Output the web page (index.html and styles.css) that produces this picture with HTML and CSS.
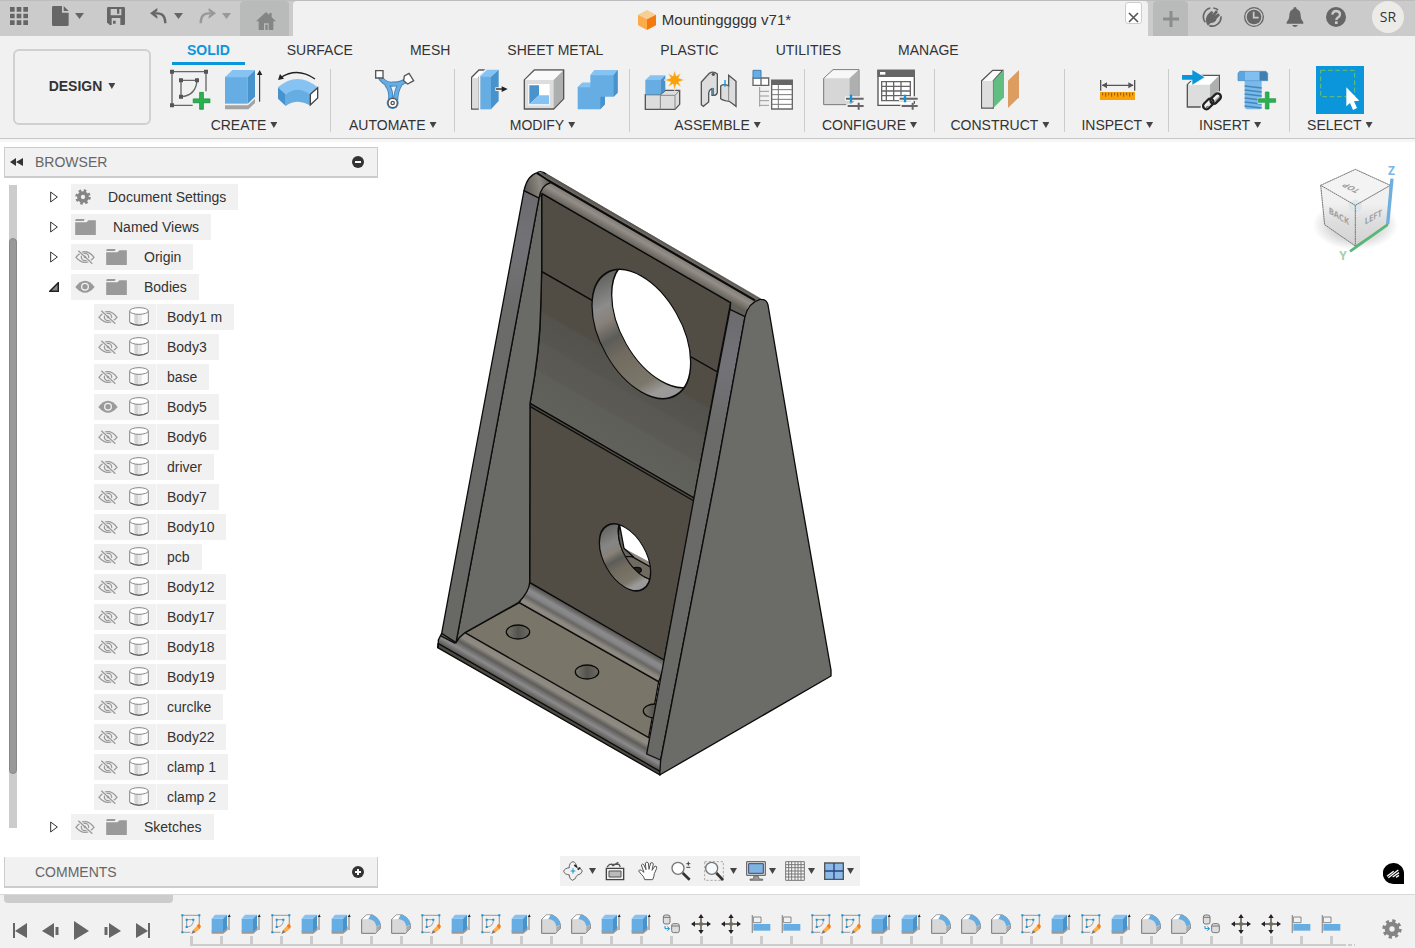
FILE: index.html
```html
<!DOCTYPE html>
<html lang="en">
<head>
<meta charset="utf-8">
<title>Mountinggggg v71*</title>
<link rel="stylesheet" href="styles.css">
</head>
<body>
<svg class="defs" aria-hidden="true">
  <defs>
    <symbol id="eye-off" viewBox="0 0 60 42"><g fill="none" stroke="#9a9a9a" stroke-width="4"><path d="M3 22Q30-12 57 22Q30 52 3 22Z"/><circle cx="30" cy="21" r="11"/><path d="M10 2L52 41" stroke="#f1f1f1" stroke-width="9"/><path d="M10 2L52 41"/></g><circle cx="30" cy="21" r="4" fill="#9a9a9a"/></symbol>
    <symbol id="eye-on" viewBox="0 0 60 42"><path d="M1 21Q30-16 59 21Q30 56 1 21Z" fill="#9a9a9a"/><circle cx="30" cy="20" r="10" fill="none" stroke="#f1f1f1" stroke-width="4"/></symbol>
    <symbol id="folder" viewBox="0 0 62 48"><path d="M0 10H34L40 4H62V48H0Z" fill="#9a9a9a"/><path d="M2 0H28L26 6H0Z" fill="#9a9a9a"/></symbol>
    <symbol id="body" viewBox="0 0 60 60"><path d="M2 13V46Q30 62 58 46V13Z" fill="#fbfbfb" stroke="#888" stroke-width="3"/><path d="M4 48Q30 62 56 48" fill="none" stroke="#555" stroke-width="3"/><rect x="16" y="20" width="12" height="31" fill="#d4d4d4"/><rect x="28" y="20" width="10" height="31" fill="#e6e6e6"/><ellipse cx="30" cy="12" rx="28" ry="10" fill="#fff" stroke="#888" stroke-width="3"/></symbol>
    <symbol id="closed" viewBox="0 0 24 36"><path d="M2 3V33L22 18Z" fill="#fff" stroke="#333" stroke-width="3"/></symbol>
    <symbol id="open" viewBox="0 0 27 27"><path d="M25 2V25H2Z" fill="#888" stroke="#222" stroke-width="4"/></symbol>
    <symbol id="gear" viewBox="0 0 60 60"><circle cx="30" cy="30" r="24" fill="none" stroke="#858585" stroke-width="10" stroke-dasharray="9.4 9.45"/><circle cx="30" cy="30" r="15" fill="none" stroke="#858585" stroke-width="14"/></symbol>

    <symbol id="t-sketch" viewBox="0 0 60 60"><path d="M4 4H55V36M4 4V55H28" fill="none" stroke="#aaa" stroke-width="4"/><path d="M17 17H37C37 30 32 38 17 39Z" fill="none" stroke="#999" stroke-width="3"/><g fill="#0b96dc"><path d="M1 1h6v6h-6zM52 1h6v6h-6zM1 52h6v6h-6zM14 14h6v6h-6zM34 14h6v6h-6zM14 36h6v6h-6z"/></g><path d="M36 48L48 36L57 44L44 55Z" fill="#ffad46"/><path d="M47 36L52 30Q60 31 59 39L56 45Z" fill="#f57c14"/><path d="M36 48L31 60L44 55Z" fill="#777"/></symbol>
    <symbol id="t-extrude" viewBox="0 0 60 60"><path d="M2 48H36L50 36V48L37 59H2Z" fill="#999"/><path d="M2 14H36V53H2Z" fill="#66ade3"/><path d="M2 14L12 2H48L36 14Z" fill="#86c3f3"/><path d="M36 14L48 2V42L36 53Z" fill="#4993cc"/><path d="M54 8V48" stroke="#777" stroke-width="3"/><path d="M50 9L55 1L59 9Z" fill="#222"/></symbol>
    <symbol id="t-fillet" viewBox="0 0 60 60"><path d="M2 16L16 3H34Q56 14 58 34V44L44 58H2Z" fill="#d8d8d8" stroke="#777" stroke-width="3"/><path d="M3 16L16 4H28L22 15Z" fill="#fff"/><path d="M46 38L58 34V44L46 57Z" fill="#aaa"/><path d="M22 15L30 2Q56 8 59 32L46 37Q44 18 22 15Z" fill="#66ade3"/></symbol>
    <symbol id="t-copy" viewBox="0 0 60 60"><g fill="#ddd" stroke="#777" stroke-width="3"><rect x="7" y="3" width="20" height="27" rx="6"/><rect x="32" y="29" width="23" height="27" rx="6"/><path d="M7 10H27M32 36H55"/></g><path d="M12 36V44H24M19 38L26 44L19 50" fill="none" stroke="#0b96dc" stroke-width="3"/></symbol>
    <symbol id="t-move" viewBox="0 0 60 60"><path d="M30 8V52M8 30H52" stroke="#4a4844" stroke-width="4"/><path d="M30 0L38 12H22ZM30 60L38 48H22ZM0 30L12 22V38ZM60 30L48 22V38Z" fill="#222"/><path d="M25 25h10v10h-10z" fill="#756e5c"/></symbol>
    <symbol id="t-align" viewBox="0 0 60 60"><path d="M4 3V57" stroke="#999" stroke-width="4"/><path d="M7 9H30V26H7Z" fill="#f1f1f1" stroke="#888" stroke-width="3"/><path d="M7 30H58V50H7Z" fill="#66ade3"/></symbol>

    <linearGradient id="rail" gradientUnits="userSpaceOnUse" x1="365" y1="100" x2="402" y2="36"><stop offset="0" stop-color="#625f59"/><stop offset=".35" stop-color="#938e87"/><stop offset=".6" stop-color="#7b766f"/><stop offset=".8" stop-color="#4d4a44"/><stop offset="1" stop-color="#87847e"/></linearGradient>
    <linearGradient id="cap" x1="0" y1="0.6" x2="1" y2="0.4"><stop offset="0" stop-color="#595751"/><stop offset=".6" stop-color="#8d8983"/><stop offset="1" stop-color="#5e5b55"/></linearGradient>
    <linearGradient id="bands" gradientUnits="userSpaceOnUse" x1="365" y1="335" x2="185" y2="647"><stop offset=".28" stop-color="#514d45"/><stop offset=".3" stop-color="#54524c"/><stop offset=".5" stop-color="#565550"/><stop offset=".52" stop-color="#595853"/><stop offset=".72" stop-color="#5b5a55"/><stop offset=".74" stop-color="#5f5f5a"/><stop offset="1" stop-color="#61615c"/></linearGradient>
    <linearGradient id="bore" gradientUnits="userSpaceOnUse" x1="540" y1="350" x2="746" y2="715"><stop offset="0" stop-color="#62625f"/><stop offset=".2" stop-color="#8c8c8c"/><stop offset=".3" stop-color="#888178"/><stop offset=".43" stop-color="#5c5c58"/><stop offset=".55" stop-color="#706a5f"/><stop offset=".82" stop-color="#7c776b"/><stop offset=".92" stop-color="#9c9b9a"/><stop offset="1" stop-color="#999"/></linearGradient>
    <linearGradient id="bore2" gradientUnits="userSpaceOnUse" x1="545" y1="1105" x2="648" y2="1288"><stop offset="0" stop-color="#62625f"/><stop offset=".25" stop-color="#868686"/><stop offset=".38" stop-color="#888178"/><stop offset=".5" stop-color="#5c5c58"/><stop offset=".62" stop-color="#706a5f"/><stop offset=".85" stop-color="#7c776b"/><stop offset=".95" stop-color="#9c9b9a"/><stop offset="1" stop-color="#999"/></linearGradient>
    <linearGradient id="fillet" gradientUnits="userSpaceOnUse" x1="330" y1="1267" x2="295" y2="1328"><stop offset="0" stop-color="#4c4a45"/><stop offset=".3" stop-color="#8b8b8d"/><stop offset=".45" stop-color="#858588"/><stop offset=".6" stop-color="#686763"/><stop offset=".8" stop-color="#8f8a82"/><stop offset="1" stop-color="#8a857b"/></linearGradient>
    <linearGradient id="lip" gradientUnits="userSpaceOnUse" x1="135" y1="1418" x2="101" y2="1477"><stop offset="0" stop-color="#8d887f"/><stop offset=".25" stop-color="#8f8a82"/><stop offset=".45" stop-color="#5e5d59"/><stop offset=".72" stop-color="#8b8b8d"/><stop offset="1" stop-color="#55534e"/></linearGradient>
    <linearGradient id="strip" x1="0" y1="0" x2="0" y2="1"><stop offset="0" stop-color="#6b6b6e"/><stop offset=".12" stop-color="#737278"/><stop offset=".26" stop-color="#6b6b6a"/><stop offset="1" stop-color="#686965"/></linearGradient>
    <linearGradient id="screw"><stop offset="0" stop-color="#7a776e"/><stop offset=".5" stop-color="#55534d"/><stop offset="1" stop-color="#6d6b65"/></linearGradient>
    <clipPath id="bigHole"><ellipse rx="148" ry="174" transform="translate(664 522) skewY(29.9)"/></clipPath>
    <clipPath id="smallHole"><ellipse rx="77" ry="90" transform="translate(615 1192) skewY(29.9)"/></clipPath>
    <clipPath id="smallThrough"><ellipse rx="77" ry="90" transform="translate(672 1160) skewY(29.9)"/></clipPath>
    <radialGradient id="shade"><stop offset=".5" stop-color="#bbb"/><stop offset="1" stop-color="#fff"/></radialGradient>
    <linearGradient id="cubeSide" x1="0" y1="0" x2="0" y2="1"><stop offset=".3" stop-color="#f0f0f0"/><stop offset=".6" stop-color="#dedede"/><stop offset="1" stop-color="#d2d2d2"/></linearGradient>
  </defs>
</svg>

<header class="topbar">
  <div class="quick">
    <button class="tool" aria-label="Data panel"><svg width="18" height="18" viewBox="0 0 54 54"><path d="M0 0h14v14H0zM20 0h14v14H20zM40 0h14v14H40zM0 20h14v14H0zM20 20h14v14H20zM40 20h14v14H40zM0 40h14v14H0zM20 40h14v14H20zM40 40h14v14H40z" fill="#666"/></svg></button>
    <button class="tool tool--file" aria-label="File"><svg width="17" height="20" viewBox="0 0 51 60"><path d="M4 0H30V20H50V56Q50 60 46 60H4Q0 60 0 56V4Q0 0 4 0Z" fill="#666"/><path d="M35 0L50 15H35Z" fill="#666"/></svg><i class="caret caret--big"></i></button>
    <button class="tool tool--save" aria-label="Save"><svg width="18" height="18" viewBox="0 0 54 54"><path d="M4 0H50Q54 0 54 4V50Q54 54 50 54H8L0 46V4Q0 0 4 0Z" fill="#666"/><path d="M11 6H43V25H11ZM14 33H40V54H14Z" fill="#ccc"/><path d="M30 4H37V20H30ZM18 41H26V50H18Z" fill="#666"/></svg></button>
    <button class="tool tool--undo" aria-label="Undo"><svg width="18" height="16" viewBox="0 0 54 48"><path d="M22 0V9L12 16L22 24V32L0 16Z" fill="#666"/><path d="M10 16H22Q46 16 46 46" fill="none" stroke="#666" stroke-width="7"/></svg><i class="caret caret--big"></i></button>
    <button class="tool tool--redo" aria-label="Redo" disabled><svg width="18" height="16" viewBox="0 0 54 48"><path d="M32 0V9L42 16L32 24V32L54 16Z" fill="#999"/><path d="M44 16H32Q8 16 8 46" fill="none" stroke="#999" stroke-width="7"/></svg><i class="caret caret--big"></i></button>
  </div>
  <button class="home" aria-label="Home"><svg width="20" height="18" viewBox="0 0 60 54"><path d="M30 0L40 9V3H47V16L60 28H52V54H38V34H24V54H8V28H0Z" fill="#858585"/><path d="M28 38H35V54H28Z" fill="#858585"/></svg></button>
  <div class="doc">
    <svg width="18" height="20" viewBox="0 0 54 60"><path d="M27 0L54 14L27 28L0 14Z" fill="#f5cf96"/><path d="M0 14L27 28V60L0 46Z" fill="#fcab4a"/><path d="M54 14L27 28V60L54 46Z" fill="#f5780f"/></svg>
    <span>Mountinggggg v71*</span>
    <button class="doc__close" aria-label="Close"><svg width="11" height="11" viewBox="0 0 11 11"><path d="M1 1L10 10M10 1L1 10" stroke="#555" stroke-width="1.6"/></svg></button>
  </div>
  <button class="newtab" aria-label="New tab"><svg width="16" height="16" viewBox="0 0 16 16"><path d="M8 0V16M0 8H16" stroke="#8c8c8c" stroke-width="3"/></svg></button>
  <div class="status">
    <button class="tool" aria-label="Extensions"><svg width="20" height="20" viewBox="0 0 60 60"><path d="M25 3A27 27 0 0 0 10 46M22 56A27 27 0 0 0 57 28M34 3Q42 4 48 9" fill="none" stroke="#666" stroke-width="5"/><path d="M14 50Q8 34 18 22L28 12L34 16L30 23L42 10L48 15L38 27L49 19L54 25L44 35Q40 48 26 48L18 56Z" fill="#666"/></svg></button>
    <button class="tool" aria-label="Job status"><svg width="20" height="20" viewBox="0 0 60 60"><circle cx="30" cy="30" r="28" fill="none" stroke="#666" stroke-width="4"/><circle cx="30" cy="30" r="22" fill="#666"/><path d="M29 14V32H44" fill="none" stroke="#ccc" stroke-width="5"/></svg></button>
    <button class="tool" aria-label="Notifications"><svg width="18" height="20" viewBox="0 0 54 60"><path d="M27 0Q32 0 32 6Q44 10 44 26Q44 38 52 46V50H2V46Q10 38 10 26Q10 10 22 6Q22 0 27 0ZM18 54H36Q32 60 27 60Q22 60 18 54Z" fill="#666"/></svg></button>
    <button class="tool" aria-label="Help"><svg width="20" height="20" viewBox="0 0 60 60"><circle cx="30" cy="30" r="30" fill="#666"/><path d="M19 23Q20 12 31 12Q42 13 42 22Q42 28 35 32Q31 35 31 39" fill="none" stroke="#ccc" stroke-width="7"/><path d="M27 43h8v8h-8z" fill="#ccc"/></svg></button>
    <button class="avatar">SR</button>
  </div>
</header>

<section class="ribbon">
  <button class="workspace-switch">DESIGN <i class="caret"></i></button>
  <div class="ribbon__main">
    <nav class="tabs">
      <button class="tab tab--active">SOLID</button>
      <button class="tab">SURFACE</button>
      <button class="tab">MESH</button>
      <button class="tab">SHEET METAL</button>
      <button class="tab">PLASTIC</button>
      <button class="tab">UTILITIES</button>
      <button class="tab">MANAGE</button>
    </nav>
    <div class="groups">
      <div class="group group--first">
        <div class="group__icons">
          <button class="cmd" aria-label="Create Sketch"><svg viewBox="0 0 144 144"><path d="M18 17H120V76M18 17V118H80" fill="none" stroke="#666" stroke-width="4"/><path d="M45 92V43H93Q90 88 45 92" fill="none" stroke="#666" stroke-width="4"/><path d="M12 11h12v12H12zM114 11h12v12h-12zM12 112h12v12H12zM39 37h12v12H39zM87 37h12v12H87zM39 86h12v12H39z" fill="#555"/><path d="M99 77H114V97H134V112H114V132H99V112H80V97H99Z" fill="#2bb24f" stroke="#f1f1f1" stroke-width="2"/><path d="M101 80H112V99H131V110H112V129H101V110H82V99H101Z" fill="none" stroke="#1d9440" stroke-width="2"/></svg></button>
          <button class="cmd" aria-label="Extrude"><svg viewBox="0 0 144 144"><path d="M15 118H84L105 98V111L85 130H15Z" fill="#a3a3a3"/><path d="M15 32H83V113H15Z" fill="#66ade3"/><path d="M15 34L37 12H105L83 34Z" fill="#86c3f3"/><path d="M83 34L105 12V92L83 113Z" fill="#4993cc"/><path d="M119 107V20" stroke="#222" stroke-width="3"/><path d="M119 12L127 27H111Z" fill="#222"/></svg></button>
          <button class="cmd" aria-label="Revolve"><svg viewBox="0 0 144 144"><path d="M12 64Q70 14 131 64L108 85Q70 62 35 85Z" fill="#86c3f3"/><path d="M35 85Q70 58 108 85V118Q70 96 35 120Z" fill="#66ade3"/><path d="M12 64L35 85V120L12 98Z" fill="#4993cc"/><path d="M109 85L131 65V96L109 117Z" fill="#fff" stroke="#444" stroke-width="4"/><path d="M123 39Q70 2 20 35" fill="none" stroke="#222" stroke-width="4"/><path d="M12 42L18 24L30 38Z" fill="#222"/></svg></button>
        </div>
        <button class="group__label">CREATE <i class="caret"></i></button>
      </div>
      <div class="group group--wide">
        <div class="group__icons">
          <button class="cmd" aria-label="Automated Modeling"><svg viewBox="0 0 144 144"><path d="M30 28Q46 58 72 54Q98 56 118 38M52 54Q70 76 64 104M94 54Q80 76 80 104" fill="none" stroke="#3f7fb2" stroke-width="15"/><path d="M30 28Q46 58 72 54Q98 56 118 38M52 54Q70 76 64 104M94 54Q80 76 80 104" fill="none" stroke="#66ade3" stroke-width="10"/><path d="M20 14H42V36H20Z" fill="#fff" stroke="#555" stroke-width="4"/><path d="M120 22L134 44L116 54L104 44L106 30Z" fill="#fff" stroke="#555" stroke-width="4"/><circle cx="71" cy="111" r="18" fill="#3f94d6"/><circle cx="71" cy="111" r="14" fill="#fff" stroke="#555" stroke-width="4"/><circle cx="71" cy="111" r="5" fill="none" stroke="#555" stroke-width="4"/></svg></button>
        </div>
        <button class="group__label">AUTOMATE <i class="caret"></i></button>
      </div>
      <div class="group">
        <div class="group__icons">
          <button class="cmd" aria-label="Press Pull"><svg viewBox="0 0 144 144"><path d="M20 34L42 12H64L42 34V129H20Z" fill="#fff" stroke="#555" stroke-width="4"/><path d="M22 36H40V127H22Z" fill="#ddd"/><path d="M62 8H72L47 32V134H41V30Z" fill="#f1f1f1"/><path d="M46 30H78V130H46Z" fill="#66ade3"/><path d="M46 30L66 11H101L78 32H46Z" fill="#86c3f3"/><path d="M78 32L101 11V105L78 130Z" fill="#4993cc"/><path d="M91 64H108V60L130 69L108 79V75H91Z" fill="#f1f1f1"/><path d="M93 69H112" stroke="#222" stroke-width="4"/><path d="M110 61L128 69L110 78Z" fill="#222"/></svg></button>
          <button class="cmd" aria-label="Shell"><svg viewBox="0 0 144 144"><path d="M16 42L46 12H134V98L104 129H16Z" fill="#ddd" stroke="#555" stroke-width="4"/><path d="M18 42L47 14H132L104 42Z" fill="#fafafa"/><path d="M104 42L132 14V97L104 127Z" fill="#aeb0b0"/><path d="M28 54H92V118H28Z" fill="#fff"/><path d="M31 58H60V88L31 115Z" fill="#4993cc"/><path d="M31 115L60 88H90V115Z" fill="#86c3f3"/></svg></button>
          <button class="cmd" aria-label="Combine"><svg viewBox="0 0 144 144"><path d="M14 64L28 50H52V28L65 12H134V80L122 92H96V115L82 130H14Z" fill="#66ade3"/><path d="M52 28L65 12H134L122 28ZM14 64L28 50H52V64Z" fill="#86c3f3"/><path d="M122 28L134 12V80L122 92ZM82 92H96V115L82 130Z" fill="#4993cc"/></svg></button>
        </div>
        <button class="group__label">MODIFY <i class="caret"></i></button>
      </div>
      <div class="group">
        <div class="group__icons">
          <button class="cmd" aria-label="New Component"><svg viewBox="0 0 144 144"><path d="M16 86H61L76 73H119V115L105 130H16Z" fill="#ddd" stroke="#555" stroke-width="4"/><path d="M61 86V130M105 88V128M61 88H105L118 74" fill="none" stroke="#888" stroke-width="3"/><path d="M16 42H61V86H16Z" fill="#66ade3"/><path d="M16 42L31 28H76L61 42Z" fill="#86c3f3"/><path d="M61 42L76 28V72L61 86Z" fill="#4993cc"/><path d="M104 12L109 30L123 21L116 36L134 42L116 48L124 63L109 54L104 74L99 54L84 63L92 48L72 42L92 36L84 21L99 30Z" fill="#f9a20c" stroke="#f1f1f1" stroke-width="2"/></svg></button>
          <button class="cmd" aria-label="Joint"><svg viewBox="0 0 144 144"><path d="M22 48L46 22Q58 14 70 24V80Q66 90 54 88V68Q44 72 44 84V108L28 121L22 116Z" fill="#ddd" stroke="#555" stroke-width="4"/><circle cx="58" cy="25" r="5" fill="#555"/><path d="M104 28L126 46V121L106 106Q88 104 80 98V60Q90 52 104 60Z" fill="#ddd" stroke="#555" stroke-width="4"/><path d="M104 60V104" stroke="#888" stroke-width="3"/><path d="M58 66V88M93 42V62" stroke="#0b96dc" stroke-width="4"/></svg></button>
          <button class="cmd" aria-label="Bill of Materials"><svg viewBox="0 0 144 144"><path d="M15 36H62V58H15ZM39 36V58" fill="#fff" stroke="#666" stroke-width="4"/><path d="M15 13H39V36H15Z" fill="#66ade3" stroke="#3f7fb2" stroke-width="3"/><path d="M35 63V122M35 76H63M35 90H63M35 104H63M35 118H63" stroke="#999" stroke-width="3"/><path d="M71 43H133V129H71Z" fill="#fff" stroke="#666" stroke-width="4"/><path d="M69 41H135V57H69Z" fill="#666"/><path d="M71 71H133M71 86H133M71 100H133M71 115H133M91 57V129" stroke="#777" stroke-width="3"/></svg></button>
        </div>
        <button class="group__label">ASSEMBLE <i class="caret"></i></button>
      </div>
      <div class="group group--mid">
        <div class="group__icons">
          <button class="cmd" aria-label="Configure Model"><svg viewBox="0 0 144 144"><path d="M14 37L42 11H120V90L92 116H14Z" fill="#d6d6d6" stroke="#777" stroke-width="3"/><path d="M16 37L43 13H118L92 37Z" fill="#f7f7f7"/><path d="M92 37L118 13V89L92 114Z" fill="#aeb0b0"/><path d="M78 98H136M82 120H136" stroke="#f1f1f1" stroke-width="14"/><path d="M81 98H134M86 120H134M119 110V131" stroke="#666" stroke-width="6"/><path d="M96 86V109" stroke="#0b96dc" stroke-width="7"/></svg></button>
          <button class="cmd" aria-label="Configuration Table"><svg viewBox="0 0 144 144"><path d="M15 13H124V118H15Z" fill="#fff" stroke="#555" stroke-width="4"/><path d="M13 11H126V33H13Z" fill="#666"/><path d="M21 18h16v8H21z" fill="#fff"/><path d="M26 47H112V104H26ZM26 61H112M26 75H112M26 89H112M40 47V104M62 47V104M84 47V104" fill="none" stroke="#666" stroke-width="4"/><path d="M78 98H136M82 120H136" stroke="#f1f1f1" stroke-width="14"/><path d="M80 98H134M86 120H134M119 110V131" stroke="#666" stroke-width="6"/><path d="M96 86V109" stroke="#0b96dc" stroke-width="7"/></svg></button>
        </div>
        <button class="group__label">CONFIGURE <i class="caret"></i></button>
      </div>
      <div class="group group--snug">
        <div class="group__icons">
          <button class="cmd" aria-label="Offset Plane"><svg viewBox="0 0 144 144"><path d="M17 44L50 13H80L52 44V126H17Z" fill="#fafafa" stroke="#555" stroke-width="4"/><path d="M19 45H50V124H19Z" fill="#ddd"/><path d="M52 44L84 12V94L52 126Z" fill="#62bd82"/><path d="M96 44L129 12V94L96 126Z" fill="#dd9c60"/></svg></button>
        </div>
        <button class="group__label">CONSTRUCT <i class="caret"></i></button>
      </div>
      <div class="group group--snug">
        <div class="group__icons">
          <button class="cmd" aria-label="Measure"><svg viewBox="0 0 144 144"><path d="M23 42V74M125 42V74M28 58H120" stroke="#555" stroke-width="4"/><path d="M26 58L42 49V67ZM122 58L106 49V67Z" fill="#555"/><path d="M21 78H126V102H21Z" fill="#f9a20c"/><path d="M29 80V88M38 80V92M47 80V88M56 80V92M65 80V88M74 80V92M83 80V88M92 80V92M101 80V88M110 80V92M119 80V88" stroke="#8a5a05" stroke-width="3"/></svg></button>
        </div>
        <button class="group__label">INSPECT <i class="caret"></i></button>
      </div>
      <div class="group">
        <div class="group__icons">
          <button class="cmd" aria-label="Insert Derive"><svg viewBox="0 0 144 144"><path d="M25 56L54 28H121V95L93 123H25Z" fill="#ddd" stroke="#555" stroke-width="4"/><path d="M27 56L55 30H119L93 56Z" fill="#fff"/><path d="M93 56L119 30V94L93 121Z" fill="#aeb0b0"/><path d="M7 24H38V8L80 34L38 60V44H7Z" fill="#f1f1f1"/><path d="M9 27H40V12L76 34L40 56V41H9Z" fill="#0b96dc"/><g fill="none" stroke="#f1f1f1" stroke-width="15"><rect x="94" y="90" width="36" height="20" rx="10" transform="rotate(-45 112 97)"/><rect x="68" y="108" width="36" height="20" rx="10" transform="rotate(-45 88 116)"/></g><g fill="none" stroke="#222" stroke-width="7"><rect x="92" y="88" width="36" height="20" rx="10" transform="rotate(-45 110 98)"/><rect x="70" y="104" width="36" height="20" rx="10" transform="rotate(-45 88 114)"/></g></svg></button>
          <button class="cmd" aria-label="Insert Fastener"><svg viewBox="0 0 144 144"><path d="M35 44H86V126L80 130H41L35 126Z" fill="#7ab9ea"/><path d="M35 60L86 66M35 72L86 78M35 84L86 90M35 96L86 102M35 108L86 114M35 120L86 126" stroke="#4388bd" stroke-width="4"/><path d="M20 16H99L104 22V44H15V22Z" fill="#5ca6df" stroke="#4388bd" stroke-width="2"/><path d="M36 17H80V43H36Z" fill="#80bff0"/><path d="M80 17H98L103 22V43H80Z" fill="#3f7fb2"/><path d="M93 76H111V95H130V113H111V132H93V113H74V95H93Z" fill="#f1f1f1"/><path d="M97 78H108V98H128V109H108V129H97V109H76V98H97Z" fill="#2bb24f" stroke="#1d9440" stroke-width="2"/></svg></button>
        </div>
        <button class="group__label">INSERT <i class="caret"></i></button>
      </div>
      <div class="group group--last">
        <div class="group__icons">
          <button class="cmd cmd--on" aria-label="Select"><svg viewBox="0 0 144 144"><path d="M14 13H116V92H14Z" fill="none" stroke="#6cc06c" stroke-width="3" stroke-dasharray="14 8"/><path d="M91 64L130 104L114 106L123 126L111 132L102 111L91 121Z" fill="#fff"/></svg></button>
        </div>
        <button class="group__label">SELECT <i class="caret"></i></button>
      </div>
    </div>
  </div>
</section>

<main class="workspace">
  <svg class="model" viewBox="0 0 1290 1890" role="img" aria-label="Mounting bracket model">
    <g stroke="#0c0c0c" stroke-width="4" stroke-linejoin="round">
      <path d="M55 1440L65 1420L108 1440L135 1418L686 1733L730 1790L719 1845L53 1463Z" fill="url(#lip)" stroke="none"/>
      <path d="M54 1450L720 1834V1845L53 1463Z" fill="#4d4a44"/>
      <path d="M298 1328L716 1565L686 1733L135 1418Z" fill="#7a7569"/>
      <path d="M329 1267L740 1502L716 1565L298 1328Z" fill="url(#fillet)"/>
      <ellipse cx="294" cy="1416" rx="35" ry="21" fill="url(#screw)"/>
      <ellipse cx="501" cy="1536" rx="35" ry="21" fill="url(#screw)"/>
      <ellipse cx="705" cy="1653" rx="35" ry="21" fill="url(#screw)"/>
      <path d="M365 100L932 428L892 636L365 335Z" fill="#514d45"/>
      <path d="M365 335L892 636L822 1014L330 730Q362 560 362 440Z" fill="url(#bands)"/>
      <path d="M330 730L822 1014L822 1024L732 1500L329 1267Z" fill="#514d45"/>
      <path d="M330 739L822 1023" fill="none"/>
      <g clip-path="url(#bigHole)">
        <path d="M500 310H830V730H500Z" fill="url(#bore)" stroke="none"/>
        <ellipse rx="148" ry="174" transform="translate(723 489) skewY(29.9)" fill="#fff"/>
      </g>
      <ellipse rx="148" ry="174" transform="translate(664 522) skewY(29.9)" fill="none"/>
      <g clip-path="url(#smallHole)">
        <path d="M530 1080H700V1300H530Z" fill="url(#bore2)" stroke="none"/>
        <ellipse rx="77" ry="90" transform="translate(672 1160) skewY(29.9)" fill="#fff"/>
        <g clip-path="url(#smallThrough)">
          <path d="M604 1160L700 1212V1300H604Z" fill="#8d8880" stroke="none"/>
          <path d="M604 1172L700 1226V1300H604Z" fill="#6f6b61"/>
          <path d="M598 1090L612 1165L640 1190H590Z" fill="#65655f"/>
          <ellipse cx="650" cy="1230" rx="14" ry="8" fill="#222"/>
        </g>
        <ellipse rx="77" ry="90" transform="translate(672 1160) skewY(29.9)" fill="none"/>
      </g>
      <ellipse rx="77" ry="90" transform="translate(615 1192) skewY(29.9)" fill="none"/>
      <path d="M357 114L365 100V335L362 440Q360 570 330 730L329 1267Q328 1295 295 1328L135 1418Q118 1430 108 1448L200 960Z" fill="#6a6b66"/>
      <path d="M312 92L357 114L200 960L108 1448L65 1420L150 960Z" fill="url(#strip)"/>
      <path d="M65 1420L55 1440V1463M60 1426L106 1450" fill="none"/>
      <path d="M357 114L362 60L350 40L372 36L1022 416L985 440L975 470L930 448L932 428L365 100Z" fill="url(#rail)" stroke="none"/>
      <path d="M312 92Q322 46 352 38L393 68Q364 74 357 114Z" fill="url(#cap)"/>
      <path d="M352 38Q364 30 378 42M350 40L1006 420M393 68L1004 422M365 100L932 428L930 448" fill="none"/>
      <path d="M378 42L1022 416" fill="none" stroke="#555" stroke-width="2"/>
      <path d="M930 448L975 470L885 960L722 1800L680 1782L832 960Z" fill="url(#strip)"/>
      <path d="M975 470Q985 428 1020 418Q1040 417 1044 435L1133 960L1233 1530V1548L719 1845L722 1800L885 960Z" fill="#6b6c67"/>
    </g>
  </svg>

  <svg class="viewcube" viewBox="0 0 300 330" role="img" aria-label="View cube">
    <ellipse cx="130" cy="195" rx="128" ry="75" fill="url(#shade)" opacity=".7"/>
    <path d="M26 76L130 28L235 76L228 194L130 258L38 194Z" fill="#e6e6e6"/>
    <path d="M26 76L130 136V258L38 194Z" fill="url(#cubeSide)"/>
    <path d="M235 76L130 136V258L228 194Z" fill="url(#cubeSide)"/>
    <path d="M26 76L130 28L235 76L130 136Z" fill="#f3f3f3"/>
    <path d="M130 118L150 128L148 150L130 158L112 150L110 128Z" fill="#d3e4ea" opacity=".7"/>
    <path d="M26 76L130 28L235 76L130 136ZM26 76L38 194L130 258L228 194L235 76M130 136V258" fill="none" stroke="#777" stroke-width="3" stroke-dasharray="6 1"/>
    <path d="M227 192L240 56" stroke="#6fafe0" stroke-width="10"/>
    <path d="M227 194L114 274" stroke="#58b777" stroke-width="8"/>
    <text transform="matrix(.85 .5 0 1 50 160)" class="cube-text">BACK</text>
    <text transform="matrix(.85 -.45 0 1 158 194)" class="cube-text">LEFT</text>
    <text transform="matrix(-.8 -.4 .8 -.5 146 90)" class="cube-text">TOP</text>
    <text x="228" y="46" class="axis axis--z">Z</text>
    <text x="82" y="300" class="axis axis--y">Y</text>
  </svg>

  <aside class="side">
    <div class="panel-head">
      <svg width="13" height="8" viewBox="0 0 13 8"><path d="M6 0V8L0 4ZM13 0V8L6 4Z" fill="#333"/></svg>
      <h2>BROWSER</h2>
      <button aria-label="Collapse"><svg width="12" height="12" viewBox="0 0 12 12"><circle cx="6" cy="6" r="6" fill="#333"/><path d="M3 6H9" stroke="#fff" stroke-width="2"/></svg></button>
    </div>
    <div class="tree-wrap">
      <div class="scroll"><span></span></div>
      <ul class="tree">
        <li><svg class="tw"><use href="#closed"/></svg><span class="chip chip--settings"><svg class="ic-gear"><use href="#gear"/></svg>Document Settings</span></li>
        <li><svg class="tw"><use href="#closed"/></svg><span class="chip chip--views"><svg class="ic-folder"><use href="#folder"/></svg>Named Views</span></li>
        <li><svg class="tw"><use href="#closed"/></svg><span class="chip"><svg class="ic-eye"><use href="#eye-off"/></svg><svg class="ic-folder"><use href="#folder"/></svg>Origin</span></li>
        <li><svg class="tw tw--open"><use href="#open"/></svg><span class="chip"><svg class="ic-eye"><use href="#eye-on"/></svg><svg class="ic-folder"><use href="#folder"/></svg>Bodies</span></li>
        <li class="child"><span class="chip"><svg class="ic-eye"><use href="#eye-off"/></svg><svg class="ic-body"><use href="#body"/></svg><b>Body1 m</b></span></li>
        <li class="child"><span class="chip"><svg class="ic-eye"><use href="#eye-off"/></svg><svg class="ic-body"><use href="#body"/></svg><b>Body3</b></span></li>
        <li class="child"><span class="chip"><svg class="ic-eye"><use href="#eye-off"/></svg><svg class="ic-body"><use href="#body"/></svg><b>base</b></span></li>
        <li class="child"><span class="chip"><svg class="ic-eye"><use href="#eye-on"/></svg><svg class="ic-body"><use href="#body"/></svg><b>Body5</b></span></li>
        <li class="child"><span class="chip"><svg class="ic-eye"><use href="#eye-off"/></svg><svg class="ic-body"><use href="#body"/></svg><b>Body6</b></span></li>
        <li class="child"><span class="chip"><svg class="ic-eye"><use href="#eye-off"/></svg><svg class="ic-body"><use href="#body"/></svg><b>driver</b></span></li>
        <li class="child"><span class="chip"><svg class="ic-eye"><use href="#eye-off"/></svg><svg class="ic-body"><use href="#body"/></svg><b>Body7</b></span></li>
        <li class="child"><span class="chip"><svg class="ic-eye"><use href="#eye-off"/></svg><svg class="ic-body"><use href="#body"/></svg><b>Body10</b></span></li>
        <li class="child"><span class="chip"><svg class="ic-eye"><use href="#eye-off"/></svg><svg class="ic-body"><use href="#body"/></svg><b>pcb</b></span></li>
        <li class="child"><span class="chip"><svg class="ic-eye"><use href="#eye-off"/></svg><svg class="ic-body"><use href="#body"/></svg><b>Body12</b></span></li>
        <li class="child"><span class="chip"><svg class="ic-eye"><use href="#eye-off"/></svg><svg class="ic-body"><use href="#body"/></svg><b>Body17</b></span></li>
        <li class="child"><span class="chip"><svg class="ic-eye"><use href="#eye-off"/></svg><svg class="ic-body"><use href="#body"/></svg><b>Body18</b></span></li>
        <li class="child"><span class="chip"><svg class="ic-eye"><use href="#eye-off"/></svg><svg class="ic-body"><use href="#body"/></svg><b>Body19</b></span></li>
        <li class="child"><span class="chip"><svg class="ic-eye"><use href="#eye-off"/></svg><svg class="ic-body"><use href="#body"/></svg><b>curclke</b></span></li>
        <li class="child"><span class="chip"><svg class="ic-eye"><use href="#eye-off"/></svg><svg class="ic-body"><use href="#body"/></svg><b>Body22</b></span></li>
        <li class="child"><span class="chip"><svg class="ic-eye"><use href="#eye-off"/></svg><svg class="ic-body"><use href="#body"/></svg><b>clamp 1</b></span></li>
        <li class="child"><span class="chip"><svg class="ic-eye"><use href="#eye-off"/></svg><svg class="ic-body"><use href="#body"/></svg><b>clamp 2</b></span></li>
        <li><svg class="tw"><use href="#closed"/></svg><span class="chip"><svg class="ic-eye"><use href="#eye-off"/></svg><svg class="ic-folder"><use href="#folder"/></svg>Sketches</span></li>
      </ul>
    </div>
    <div class="panel-head panel-head--comments">
      <h2>COMMENTS</h2>
      <button aria-label="Expand"><svg width="12" height="12" viewBox="0 0 12 12"><circle cx="6" cy="6" r="6" fill="#333"/><path d="M3 6H9M6 3V9" stroke="#fff" stroke-width="2"/></svg></button>
    </div>
  </aside>

  <div class="navbar-wrap">
    <div class="navbar">
      <button class="menu" aria-label="Orbit"><svg width="20" height="20" viewBox="0 0 60 60"><g fill="none" stroke="#666" stroke-width="3"><path d="M18 20Q20 3 30 2Q40 4 41 20M18 42Q20 56 28 58Q38 56 41 44M20 20Q4 22 2 31Q4 40 20 42M42 20Q56 22 58 30Q56 40 42 43"/><path d="M34 12L42 18M44 26L52 20" stroke="#222" stroke-width="5"/></g><path d="M30 22V38M23 30H37" stroke="#0b96dc" stroke-width="3"/></svg><i class="caret"></i></button>
      <button class="plain" aria-label="Look At"><svg width="20" height="20" viewBox="0 0 60 60"><path d="M4 22H56V56H4Z" fill="#eee" stroke="#444" stroke-width="4"/><path d="M12 30H48V48H12Z" fill="#bbb" stroke="#555" stroke-width="3"/><path d="M6 18L14 10H42L46 18M18 8L24 14L40 4" fill="none" stroke="#555" stroke-width="4"/></svg></button>
      <button class="plain" aria-label="Pan"><svg width="20" height="20" viewBox="0 0 60 60"><path d="M20 56Q18 46 10 40L2 30Q4 24 10 28L18 34L10 12Q14 6 18 12L24 26L22 6Q27 0 31 6L33 25L38 6Q44 2 46 9L42 28L51 15Q58 15 56 22L49 38Q48 48 44 56Z" fill="#fff" stroke="#555" stroke-width="3"/></svg></button>
      <button class="plain" aria-label="Zoom"><svg width="20" height="20" viewBox="0 0 60 60"><circle cx="21" cy="22" r="18" fill="#fff" stroke="#777" stroke-width="4"/><path d="M35 36L56 56" stroke="#333" stroke-width="8"/><path d="M52 2V14M46 8H58M46 19H58" stroke="#444" stroke-width="3"/></svg></button>
      <button class="menu" aria-label="Fit"><svg width="20" height="20" viewBox="0 0 60 60"><path d="M2 2H58V58H2Z" fill="none" stroke="#aaa" stroke-width="3" stroke-dasharray="7 5"/><circle cx="23" cy="22" r="18" fill="#f6fafc" stroke="#777" stroke-width="4"/><path d="M37 36L57 57" stroke="#333" stroke-width="8"/></svg><i class="caret"></i></button>
      <button aria-label="Display Settings"><svg width="20" height="20" viewBox="0 0 60 60"><path d="M2 2H58V43H2Z" fill="#ddd" stroke="#555" stroke-width="3"/><path d="M8 8H52V37H8Z" fill="#7fb3e0" stroke="#447" stroke-width="3"/><path d="M24 44H36L40 54H50V58H12V54H22Z" fill="#999" stroke="#555" stroke-width="2"/></svg><i class="caret"></i></button>
      <button aria-label="Grid"><svg width="20" height="20" viewBox="0 0 60 60"><path d="M2 2H58V58H2ZM2 11H58M2 20H58M2 30H58M2 39H58M2 48H58M11 2V58M20 2V58M30 2V58M39 2V58M48 2V58" fill="#f7f7f7" stroke="#777" stroke-width="3"/></svg><i class="caret"></i></button>
      <button aria-label="Viewports"><svg width="20" height="20" viewBox="0 0 60 60"><path d="M2 6H58V55H2Z" fill="#8abbe6" stroke="#555" stroke-width="4"/><path d="M30 6V55M2 30H58" stroke="#2b3f80" stroke-width="4"/></svg><i class="caret"></i></button>
    </div>
  </div>
  <button class="assistant" aria-label="Assistant"><svg width="21" height="21" viewBox="0 0 63 63"><path d="M31 0A31 31 0 0 1 63 31V63H31A31 31 0 0 1 31 0Z"/><path d="M12 40L32 25M16 44L46 21M29 42L48 29M39 43L48 37" stroke="#fff" stroke-width="4"/></svg></button>
</main>

<footer class="timeline">
  <div class="timeline__scroll"></div>
  <div class="timeline__body">
    <div class="player">
      <button aria-label="Start"><svg width="15" height="15" viewBox="0 0 15 15"><path d="M2 0V15" stroke="#666" stroke-width="2"/><path d="M15 0V15L3 8Z" fill="#666"/></svg></button>
      <button aria-label="Step back"><svg width="17" height="15" viewBox="0 0 17 15"><path d="M12 0V15L0 8Z" fill="#666"/><path d="M15 4V12" stroke="#666" stroke-width="3"/></svg></button>
      <button aria-label="Play"><svg width="15" height="19" viewBox="0 0 15 19"><path d="M0 0V19L15 10Z" fill="#666"/></svg></button>
      <button aria-label="Step forward"><svg width="17" height="15" viewBox="0 0 17 15"><path d="M5 0V15L17 8Z" fill="#666"/><path d="M2 4V12" stroke="#666" stroke-width="3"/></svg></button>
      <button aria-label="End"><svg width="15" height="15" viewBox="0 0 15 15"><path d="M13 0V15" stroke="#666" stroke-width="2"/><path d="M0 0V15L12 8Z" fill="#666"/></svg></button>
    </div>
    <div class="track">
      <button aria-label="Sketch"><svg><use href="#t-sketch"/></svg></button>
      <button aria-label="Extrude"><svg><use href="#t-extrude"/></svg></button>
      <button aria-label="Extrude"><svg><use href="#t-extrude"/></svg></button>
      <button aria-label="Sketch"><svg><use href="#t-sketch"/></svg></button>
      <button aria-label="Extrude"><svg><use href="#t-extrude"/></svg></button>
      <button aria-label="Extrude"><svg><use href="#t-extrude"/></svg></button>
      <button aria-label="Fillet"><svg><use href="#t-fillet"/></svg></button>
      <button aria-label="Fillet"><svg><use href="#t-fillet"/></svg></button>
      <button aria-label="Sketch"><svg><use href="#t-sketch"/></svg></button>
      <button aria-label="Extrude"><svg><use href="#t-extrude"/></svg></button>
      <button aria-label="Sketch"><svg><use href="#t-sketch"/></svg></button>
      <button aria-label="Extrude"><svg><use href="#t-extrude"/></svg></button>
      <button aria-label="Fillet"><svg><use href="#t-fillet"/></svg></button>
      <button aria-label="Fillet"><svg><use href="#t-fillet"/></svg></button>
      <button aria-label="Extrude"><svg><use href="#t-extrude"/></svg></button>
      <button aria-label="Extrude"><svg><use href="#t-extrude"/></svg></button>
      <button aria-label="Copy"><svg><use href="#t-copy"/></svg></button>
      <button aria-label="Move"><svg><use href="#t-move"/></svg></button>
      <button aria-label="Move"><svg><use href="#t-move"/></svg></button>
      <button aria-label="Align"><svg><use href="#t-align"/></svg></button>
      <button aria-label="Align"><svg><use href="#t-align"/></svg></button>
      <button aria-label="Sketch"><svg><use href="#t-sketch"/></svg></button>
      <button aria-label="Sketch"><svg><use href="#t-sketch"/></svg></button>
      <button aria-label="Extrude"><svg><use href="#t-extrude"/></svg></button>
      <button aria-label="Extrude"><svg><use href="#t-extrude"/></svg></button>
      <button aria-label="Fillet"><svg><use href="#t-fillet"/></svg></button>
      <button aria-label="Fillet"><svg><use href="#t-fillet"/></svg></button>
      <button aria-label="Fillet"><svg><use href="#t-fillet"/></svg></button>
      <button aria-label="Sketch"><svg><use href="#t-sketch"/></svg></button>
      <button aria-label="Extrude"><svg><use href="#t-extrude"/></svg></button>
      <button aria-label="Sketch"><svg><use href="#t-sketch"/></svg></button>
      <button aria-label="Extrude"><svg><use href="#t-extrude"/></svg></button>
      <button aria-label="Fillet"><svg><use href="#t-fillet"/></svg></button>
      <button aria-label="Fillet"><svg><use href="#t-fillet"/></svg></button>
      <button aria-label="Copy"><svg><use href="#t-copy"/></svg></button>
      <button aria-label="Move"><svg><use href="#t-move"/></svg></button>
      <button aria-label="Move"><svg><use href="#t-move"/></svg></button>
      <button aria-label="Align"><svg><use href="#t-align"/></svg></button>
      <button aria-label="Align"><svg><use href="#t-align"/></svg></button>
    </div>
    <button class="timeline__settings" aria-label="Timeline settings"><svg width="20" height="20"><use href="#gear"/></svg></button>
  </div>
</footer>
</body>
</html>
```

FILE: styles.css
```css
* { box-sizing: border-box; }

body {
  margin: 0;
  min-height: 100vh;
  display: flex;
  flex-direction: column;
  background: #fff;
  color: #333;
  font: 14px/20px "Liberation Sans", Arial, sans-serif;
}

button {
  display: flex;
  align-items: center;
  justify-content: center;
  margin: 0;
  padding: 0;
  border: 0;
  background: none;
  color: inherit;
  font: inherit;
}

svg { display: block; flex: none; }
.defs { position: absolute; width: 0; height: 0; }

.caret {
  width: 7px;
  height: 6px;
  background: #444;
  clip-path: polygon(0 0, 100% 0, 50% 100%);
}
.caret--big { width: 9px; background: #666; }

/* Title bar */
.topbar {
  display: flex;
  height: 36px;
  background: #cbcbcb;
  border-top: 1px solid #bdbdbd;
}
.quick { display: flex; align-items: center; height: 30px; padding-left: 10px; width: 240px; }
.tool { gap: 6px; }
.tool--file { margin-left: 24px; }
.tool--save { margin-left: 23px; }
.tool--undo { margin-left: 25px; }
.tool--redo { margin-left: 15px; }
.tool--redo .caret { background: #999; }
.home, .newtab { background: #b9bbba; border-radius: 4px 4px 0 0; }
.home { width: 49px; padding: 4px 0 0 3px; }
.doc {
  position: relative;
  flex: 1;
  display: flex;
  align-items: center;
  justify-content: center;
  gap: 6px;
  margin: 0 5px 0 4px;
  padding: 2px 12px 0 0;
  background: #f1f1f1;
  border-radius: 4px 4px 0 0;
  font-size: 15px;
}
.doc__close {
  position: absolute;
  right: 6px;
  top: 1px;
  width: 17px;
  height: 22px;
  padding-top: 8px;
  background: #fff;
  border: 1px solid #ccc;
  border-radius: 3px;
}
.newtab { width: 35px; }
.status { display: flex; align-items: center; gap: 22px; height: 31px; padding: 0 11px 0 14px; }
.avatar { width: 32px; height: 32px; margin-left: 4px; border-radius: 50%; background: #ecebe8; font: 14px/20px "Open Sans", sans-serif; }

/* Ribbon */
.ribbon {
  display: flex;
  background: #f1f1f1;
  border-bottom: 1px solid #c8c8c8;
  height: 103px;
}
.workspace-switch {
  gap: 6px;
  width: 138px;
  height: 76px;
  margin: 13px 0 0 13px;
  padding-bottom: 2px;
  border: 2px solid #d0d0d0;
  border-radius: 6px;
  font-weight: bold;
}
.ribbon__main { flex: 1; }
.tabs { display: flex; gap: 27px; height: 30px; padding-left: 21px; }
.tab { padding: 2px 15px 0; height: 29px; border-bottom: 3px solid transparent; }
.tab--active { color: #0b96dc; border-color: #0b96dc; font-weight: bold; }
.groups { display: flex; }
.group {
  position: relative;
  padding: 0 9px 0 10px;
  display: flex;
  flex-direction: column;
  align-items: center;
}
.group::after {
  content: "";
  position: absolute;
  right: 0;
  top: 3px;
  bottom: 3px;
  width: 1px;
  background: #ccc;
}
.group--first { padding: 0 9px 0 15px; }
.group--mid { padding: 0 14px; }
.group--wide { padding: 0 18px; }
.group--snug { padding: 0 16px; }
.group--last { padding: 0 17px; }
.group--last::after { display: none; }
.group__icons { display: flex; gap: 6px; }
.group__label { gap: 4px; height: 20px; margin-top: 1px; }
.cmd { width: 48px; height: 48px; }
.cmd svg { width: 48px; height: 48px; }
.cmd--on { background: #0b96dc; }

/* Workspace */
.workspace {
  position: relative;
  flex: 1;
  display: flex;
  border-top: 3px solid #f6f6f6;
}
.model { position: absolute; left: 420px; top: 18px; width: 430px; height: 630px; }
.viewcube { position: absolute; right: 3px; top: 18px; width: 100px; height: 110px; }
.cube-text { font: bold 27px "Open Sans", sans-serif; fill: #a0a0a0; }
.axis { font: bold 36px "Open Sans", sans-serif; }
.axis--z { fill: #7db8e5; }
.axis--y { fill: #a3cfb0; }

.side {
  position: relative;
  display: flex;
  flex-direction: column;
  width: 374px;
  margin: 5px 0 6px 4px;
}
.panel-head {
  display: flex;
  align-items: center;
  height: 31px;
  padding: 0 13px 0 5px;
  background: #f1f1f1;
  border: 1px solid #ccc;
  border-bottom-width: 2px;
}
.panel-head h2 { flex: 1; margin: 0 0 0 12px; font-size: 14px; font-weight: normal; color: #666; }
.panel-head--comments { margin-top: auto; padding-left: 18px; border-top: 0; }

.tree-wrap { display: flex; padding-top: 4px; }
.scroll { width: 8px; height: 643px; margin: 3px 0 0 5px; padding-top: 53px; background: #ccc; }
.scroll span { display: block; height: 536px; border-radius: 4px; background: #999; border: 1px solid #888; }
.tree { list-style: none; margin: 0; padding: 0 0 0 32px; }
.tree li { display: flex; align-items: center; height: 30px; }
.tree .child { padding-left: 45px; }
.tw { width: 10px; height: 12px; margin-right: 12px; }
.tw--open { height: 10px; }
.chip {
  display: flex;
  align-items: center;
  height: 26px;
  padding: 0 12px 0 4px;
  background: #f1f1f1;
}
.chip b { align-self: stretch; padding-left: 10px; border-left: 1px solid #fafafa; font-weight: normal; line-height: 26px; }
.ic-eye { width: 20px; height: 14px; margin-right: 11px; }
.ic-folder { width: 21px; height: 16px; margin-right: 17px; }
.ic-body { width: 20px; height: 20px; margin-right: 7px; }
.ic-gear { width: 16px; height: 16px; margin-right: 17px; }

.navbar-wrap {
  position: absolute;
  left: 0;
  right: 0;
  bottom: 8px;
  display: flex;
  justify-content: center;
  padding-left: 5px;
  pointer-events: none;
}
.navbar { display: flex; gap: 9px; height: 30px; padding: 0 6px 0 3px; background: #f1f1f1; }
.navbar button { gap: 3px; }
.navbar .menu { gap: 6px; }
.navbar .plain { padding-right: 4px; }
.assistant { position: absolute; right: 11px; bottom: 10px; }

/* Timeline */
.timeline { height: 54px; background: #f1f1f1; border-top: 1px solid #d8d8d8; }
.timeline__scroll { width: 169px; height: 8px; margin-left: 4px; background: #ccc; border-radius: 0 0 4px 4px; }
.timeline__body { display: flex; height: 45px; }
.player { display: flex; align-items: center; gap: 15px; width: 176px; height: 54px; padding-left: 12px; }
.track { display: flex; flex: 1; min-width: 0; }
.track button {
  position: relative;
  flex: 0 0 30px;
  flex-direction: column;
  justify-content: flex-start;
  height: 43px;
  padding-top: 11px;
  border-bottom: 2px solid #ccc;
}
.track svg { width: 20px; height: 20px; }
.track button::after { content: ""; width: 3px; height: 8px; margin-top: 2px; background: #ccc; }
.track button:first-child { border-bottom-color: transparent; }
.track button:first-child::before {
  content: "";
  position: absolute;
  left: 14px;
  right: 0;
  bottom: -2px;
  height: 2px;
  background: #ccc;
}
.track::after {
  content: "";
  width: 9px;
  height: 2px;
  margin-top: 41px;
  background: repeating-linear-gradient(90deg, #f1f1f1 0 2px, #ccc 2px 6px);
}
.timeline__settings { width: 46px; height: 52px; }
```
